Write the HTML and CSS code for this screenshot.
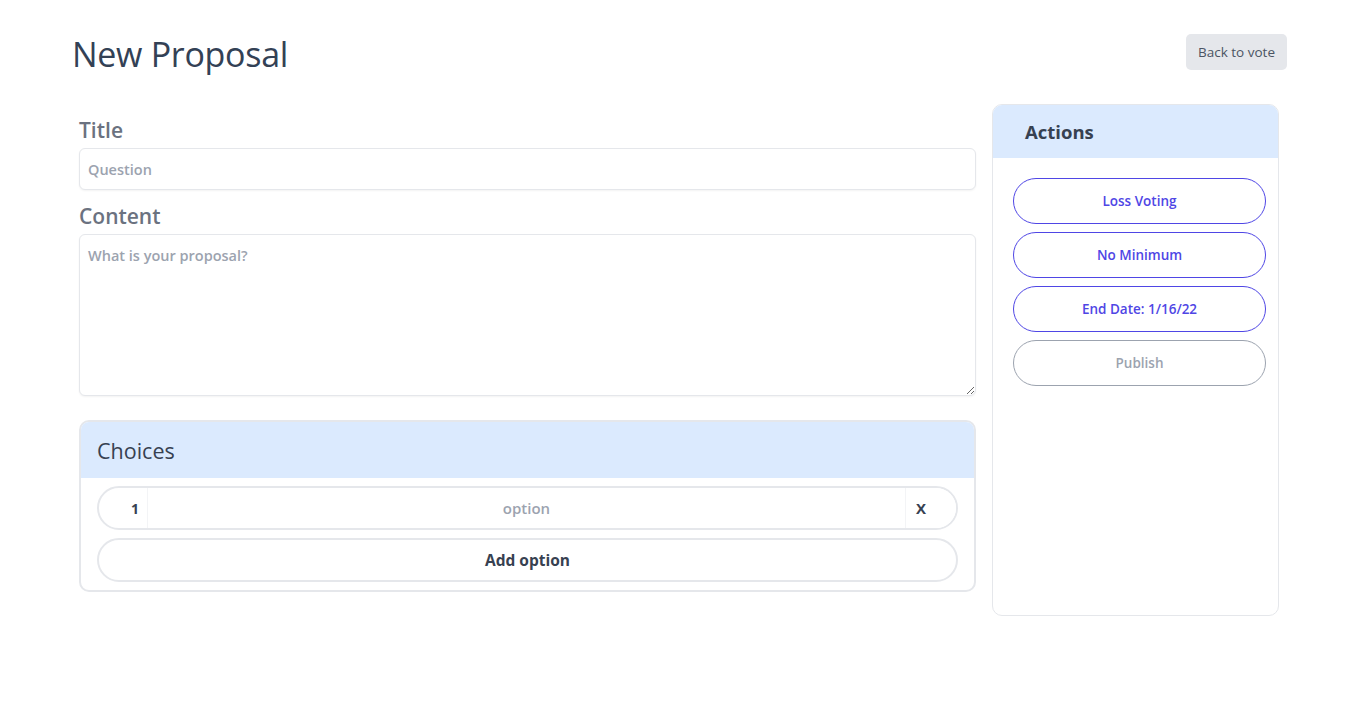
FILE: index.html
```html
<!DOCTYPE html>
<html lang="en">
<head>
  <meta charset="UTF-8">
  <meta name="viewport" content="width=device-width, initial-scale=1.0">
  <title>New Proposal</title>
  <link rel="stylesheet" href="styles.css">
</head>
<body>

  <div class="page">
    <div class="top-bar">
      <h1 class="page-title">New Proposal</h1>
      <button class="back-btn">Back to vote</button>
    </div>

    <div class="layout">
      <div class="form-col">
        <label class="field-label" for="title">Title</label>
        <input class="field-input" id="title" type="text" placeholder="Question">

        <label class="field-label" for="content">Content</label>
        <textarea class="field-area" id="content" placeholder="What is your proposal?"></textarea>

        <div class="choices-card">
          <div class="choices-head">Choices</div>
          <div class="choices-body">
            <div class="option-row">
              <span class="option-num">1</span>
              <input class="option-input" type="text" placeholder="option">
              <button class="option-remove">X</button>
            </div>
            <button class="add-option">Add option</button>
          </div>
        </div>
      </div>

      <div class="actions-card">
        <div class="actions-head">Actions</div>
        <div class="actions-body">
          <button class="action-btn">Loss Voting</button>
          <button class="action-btn">No Minimum</button>
          <button class="action-btn">End Date: 1/16/22</button>
          <button class="action-btn disabled">Publish</button>
        </div>
      </div>
    </div>
  </div>

</body>
</html>
```

FILE: styles.css
```css
* {
  margin: 0;
  padding: 0;
  box-sizing: border-box;
}

body {
  font-family: 'Open Sans', 'Noto Sans', sans-serif;
  background: #fff;
  color: #374151;
}

button, input, textarea {
  font-family: inherit;
}

.page {
  padding: 26px 65px 0 72px;
}

.top-bar {
  display: flex;
  justify-content: space-between;
  align-items: center;
  height: 56px;
}

.page-title {
  font-size: 34px;
  font-weight: 400;
  color: #334155;
  letter-spacing: -0.3px;
}

.back-btn {
  background: #e5e7eb;
  border: none;
  border-radius: 5px;
  padding: 0 12px;
  height: 36px;
  font-size: 13.5px;
  color: #4b5563;
  margin-top: -4px;
}

.layout {
  display: flex;
  gap: 16px;
  margin-top: 22px;
  padding-left: 7px;
  padding-right: 8px;
}

.form-col {
  flex: 1;
  display: flex;
  flex-direction: column;
  padding-top: 14px;
}

.field-label {
  font-size: 21px;
  font-weight: 600;
  color: #6b7280;
  line-height: 24px;
  margin-bottom: 6px;
}

.field-input,
.field-area {
  border: 1px solid #e5e7eb;
  border-radius: 6px;
  padding: 0 8px;
  font-size: 14.5px;
  font-weight: 600;
  color: #374151;
  box-shadow: 0 1px 2px rgba(0,0,0,0.05);
  outline: none;
}

.field-input {
  height: 42px;
  margin-bottom: 14px;
}

.field-area {
  height: 162px;
  padding-top: 11px;
  resize: vertical;
  margin-bottom: 24px;
}

.field-input::placeholder,
.field-area::placeholder,
.option-input::placeholder {
  color: #9ca3af;
}

.choices-card {
  border: 2px solid #e5e7eb;
  border-radius: 10px;
  overflow: hidden;
}

.choices-head {
  background: #dbeafe;
  height: 56px;
  display: flex;
  align-items: center;
  padding-left: 16px;
  font-size: 21.5px;
  color: #374151;
}

.choices-body {
  padding: 8px 16px 8px 16px;
  display: flex;
  flex-direction: column;
  gap: 8px;
}

.option-row {
  display: flex;
  align-items: stretch;
  height: 44px;
  border: 2px solid #e5e7eb;
  border-radius: 22px;
  overflow: hidden;
}

.option-num {
  width: 49px;
  display: flex;
  align-items: center;
  justify-content: flex-end;
  padding-right: 8px;
  font-size: 14px;
  font-weight: 700;
  color: #374151;
  border-right: 1px solid #f3f4f6;
}

.option-input {
  flex: 1;
  border: none;
  text-align: center;
  font-size: 15px;
  font-weight: 600;
  outline: none;
}

.option-remove {
  width: 51px;
  border: none;
  border-left: 1px solid #f3f4f6;
  background: #fff;
  font-size: 15px;
  font-weight: 700;
  color: #374151;
  padding-right: 20px;
}

.add-option {
  height: 44px;
  border: 2px solid #e5e7eb;
  border-radius: 22px;
  background: #fff;
  font-size: 15.5px;
  font-weight: 700;
  color: #374151;
}

.actions-card {
  width: 287px;
  height: 512px;
  border: 1px solid #e5e7eb;
  border-radius: 10px;
  overflow: hidden;
}

.actions-head {
  background: #dbeafe;
  height: 53px;
  display: flex;
  align-items: center;
  padding-left: 32px;
  font-size: 18.5px;
  font-weight: 700;
  color: #374151;
}

.actions-body {
  padding: 20px 12px 0 20px;
  display: flex;
  flex-direction: column;
  gap: 8px;
}

.action-btn {
  height: 46px;
  border: 1px solid #4f46e5;
  border-radius: 23px;
  background: #fff;
  font-size: 13.5px;
  font-weight: 600;
  color: #4f46e5;
}

.action-btn.disabled {
  border-color: #9ca3af;
  color: #9ca3af;
}
```
